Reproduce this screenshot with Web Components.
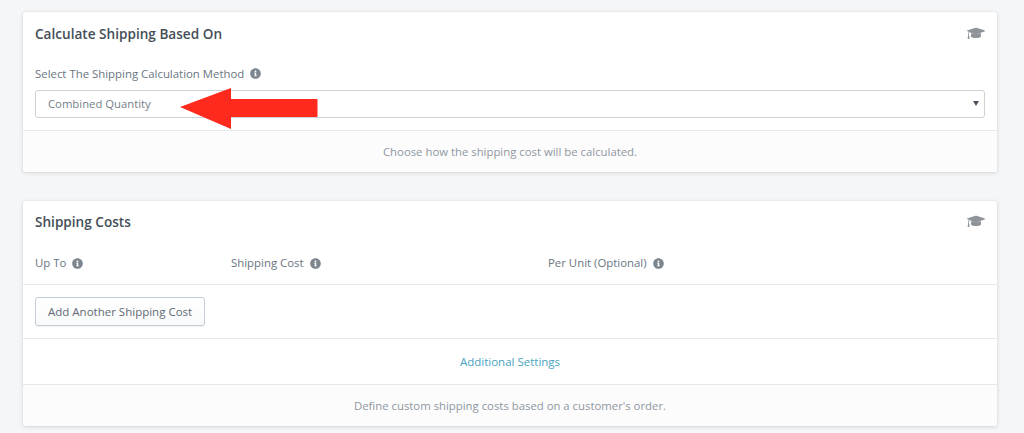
<!DOCTYPE html>
<html><head><meta charset="utf-8"><style>
html,body{margin:0;padding:0;height:433px;overflow:hidden;background:#f4f6f8}
body{font-family:"Open Sans","Noto Sans",sans-serif;font-size:12px;color:#637381}
#page{display:flex;flex-direction:column;gap:29px;padding:12px 27px 0 23px;position:relative}
</style></head><body>
<template id="t-icon"><style>:host{display:inline-flex;width:11px;height:11px;margin-left:6px;color:#7d868e}svg{width:100%;height:100%;fill:currentColor}</style>
<svg viewBox="0 0 512 512"><path d="M256 8C119 8 8 119 8 256s111 248 248 248 248-111 248-248S393 8 256 8zm0 110a42 42 0 1 1 0 84 42 42 0 0 1 0-84zm56 254c0 7-5 12-12 12h-88c-7 0-12-5-12-12v-24c0-7 5-12 12-12h12v-64h-12c-7 0-12-5-12-12v-24c0-7 5-12 12-12h64c7 0 12 5 12 12v100h12c7 0 12 5 12 12z"/></svg></template>
<template id="t-card"><style>
:host{display:block;background:#fff;border-radius:3px;box-shadow:0 0 0 1px rgba(63,63,68,.02),0 1px 4px rgba(63,63,68,.16)}
header{display:flex;justify-content:space-between;align-items:center;padding:var(--head-top,11px) 12px 0;height:21px}
h2{margin:0;font-size:13.6px;line-height:21px;font-weight:600;color:#454e57}
svg{width:18px;height:15px;fill:#8f9499}
.foot{display:flex;align-items:center;justify-content:center;background:#fcfcfd;border-top:1px solid #e6e8ea;color:#8f979f;font-size:11.35px;height:41px;border-radius:0 0 3px 3px}
</style>
<header><h2><slot name="title"></slot></h2>
<svg viewBox="0 0 640 512"><path d="M623 137 332 48a40 40 0 0 0-24 0L17 137c-23 7-23 36 0 43l50 16c-11 14-18 31-19 50-6 3-10 10-10 17 0 7 4 13 9 17L24 428c-2 8 4 20 12 20h44c8 0 14-12 12-20L69 280c5-4 9-10 9-17 0-7-4-13-10-17 1-14 9-27 20-35l220 68c10 3 28 7 24 0l291-91c23-7 23-36 0-43zM342 281c-29 9-53 4-44 0l-145-45-14 114c0 35 81 66 181 66s181-31 181-66l-14-114z"/></svg></header>
<slot></slot>
<div class="foot"><slot name="foot"></slot></div></template>
<template id="t-label"><style>:host{display:inline-flex;align-items:center;font-size:11.4px;line-height:16px;color:#6a757f}</style><slot></slot><info-icon></info-icon></template>
<template id="t-select"><style>
:host{display:flex;align-items:center;justify-content:space-between;height:25px;border:1px solid #cdd2d6;border-radius:3px;padding:0 5px 1px 12px;background:#fff;font-size:11.3px;color:#747f88}
i{width:0;height:0;border:3px solid transparent;border-top:5px solid #4b545c;border-bottom:0}
</style><slot></slot><i></i></template>
<template id="t-button"><style>
:host{display:inline-flex;align-items:center;height:27px;padding:0 12px;border:1px solid #c4cdd5;border-radius:3px;background:linear-gradient(#fff,#f9fafb);box-shadow:0 1px 0 rgba(22,29,37,.05);font-size:11.5px;color:#5f6a74}
</style><slot></slot></template>
<template id="t-arrow"><style>:host{position:absolute;left:180px;top:88px;width:138px;height:42px;display:block}svg{display:block}</style>
<svg width="138" height="42" viewBox="0 0 138 42"><path fill="#fe2a1e" d="M0 19 51 0V11H137.500V29H51V41Z"/></svg></template>

<div id="page">
<ship-card>
<span slot="title">Calculate Shipping Based On</span>
<section style="padding:21px 12px 12px;display:flex;flex-direction:column;gap:8px">
<div style="height:17px;display:flex;align-items:center"><info-label>Select The Shipping Calculation Method</info-label></div>
<ship-select>Combined Quantity</ship-select>
</section>
<span slot="foot">Choose how the shipping cost will be calculated.</span>
</ship-card>
<ship-card style="--head-top:10px">
<span slot="title">Shipping Costs</span>
<section style="display:grid;grid-template-columns:196px 317px 1fr;padding:22px 12px 12px;height:18px;align-items:center;border-bottom:1px solid #e6e8ea">
<info-label>Up To</info-label><info-label>Shipping Cost</info-label><info-label>Per Unit (Optional)</info-label>
</section>
<section style="padding:12px;display:flex;border-bottom:1px solid #e6e8ea"><ship-button>Add Another Shipping Cost</ship-button></section>
<section style="height:45px;display:flex;align-items:center;justify-content:center;font-size:11.5px;color:#4aa3c0">Additional Settings</section>
<span slot="foot">Define custom shipping costs based on a customer's order.</span>
</ship-card>
<red-arrow></red-arrow>
</div>
<script>
function def(name,id){customElements.define(name,class extends HTMLElement{constructor(){super();this.attachShadow({mode:'open'}).appendChild(document.getElementById(id).content.cloneNode(true));}});}
def('info-icon','t-icon');def('ship-card','t-card');def('info-label','t-label');def('ship-select','t-select');def('ship-button','t-button');def('red-arrow','t-arrow');
</script>
</body></html>
